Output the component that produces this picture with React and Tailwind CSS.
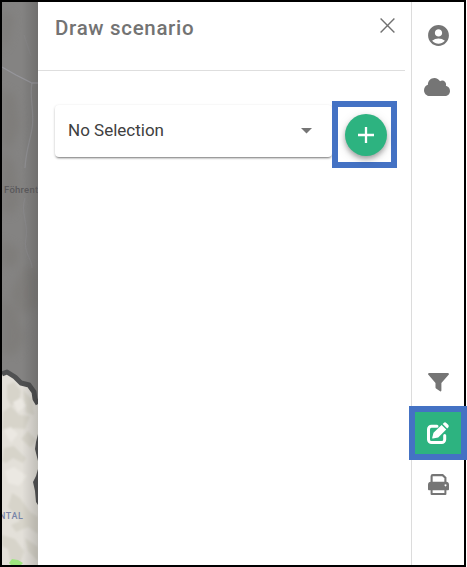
import { FaCloud } from "react-icons/fa";
import { MdAccountCircle } from "react-icons/md";

function MapStrip() {
  return (
    <div className="w-9 shrink-0 overflow-hidden bg-[#848382]">
      <svg width="36" height="563" viewBox="2 2 36 563" className="block">
        <defs>
          <linearGradient id="edge" x1="0" x2="1">
            <stop offset="0.55" stopColor="#000" stopOpacity="0" />
            <stop offset="1" stopColor="#000" stopOpacity="0.15" />
          </linearGradient>
          <filter id="soft"><feGaussianBlur stdDeviation="4" /></filter>
          <filter id="softer"><feGaussianBlur stdDeviation="1.1" /></filter>
        </defs>
        <g fill="#7c7976" opacity=".6" filter="url(#soft)">
          <path d="M2 8l12 10-6 25-6 8zM2 88l13 8 5 30-10 25-8-8zM2 150l12 12 6 40-10 14-8-6zM24 265l14 8v32l-16 10-12-20zM2 240l18 10-4 18-14-3zM2 300l12 6 12 32-12 18-12-4z" />
        </g>
        <g fill="none" stroke="#96969b" strokeWidth="1.3">
          <path d="M2 67l14 8 16 8 6 0" />
          <path d="M32 83c-3 14 3 30 0 46s-6 22-7 39" opacity=".65" />
          <path d="M25 198c-5 16 4 25 1 40s6 20 6 30" opacity=".3" />
          <path d="M24 35l7 21" opacity=".2" />
        </g>
        <path d="M2 373l6-1 7 6 5 5 9 3 6 7 3 12v160H2z" fill="#e3e0d9" />
        <g fill="#d7d4ca" filter="url(#softer)">
          <path d="M7 385l7-3 7 9-2 10-8 5-4-8zM23 390l9 9 2 16-8-2zM3 412l8-6 8 9 11 1-5 13-11-1-5 8-7-7zM4 448l10-2 12 12-3 5-10-5-7 5-4-2zM21 439l7-8 8 9-5 8zM12 493l8 5 10 14 8 5v17l-10-7-12 5-5-7 9-4-12-14zM2 535l13 4 9 12-4 14h-9l-3-16-6-3zM25 538l13 9v14l-10-10z" />
        </g>
        <path d="M3 430l8-3 7 7-7 9zM5 471l9-4 13 9-8 10-11-3zM13 402l8-4 5 8-8 6z" fill="#ebe8e2" filter="url(#softer)" />
        <path d="M2 374l5-2 8 5 6 6 8 2 5 7 1 7 3 5" fill="none" stroke="#505152" strokeWidth="5" strokeLinejoin="round" />
        <path d="M38 434l-2 8-1 7 3 12zM38 469l-2 7-3 6 2 9 1 11 2 3z" fill="#555657" />
        <path d="M9 563l3-4 6 1 5 3-2 2H11z" fill="#9ee67f" />
        <rect x="2" y="2" width="36" height="563" fill="url(#edge)" />
        <text x="4" y="193" fontSize="9.5" letterSpacing=".25" fontWeight="500" fill="#5a595b" fontFamily="Roboto, sans-serif">Föhrent</text>
        <text x="-1" y="519" fontSize="9" letterSpacing=".6" fontWeight="500" fill="#7984a8" fontFamily="Roboto, sans-serif">NTAL</text>
      </svg>
    </div>
  );
}

function ScenarioPanel() {
  return (
    <section className="flex w-[373px] shrink-0 flex-col bg-white">
      <header className="mr-[6px] flex h-[69px] shrink-0 items-start justify-between border-b border-[#dedede] pl-[17px] pr-[10px]">
        <h1 className="mt-[11px] text-[20.5px] leading-[30px] font-medium tracking-[0.68px] text-[#737373]">Draw scenario</h1>
        <button aria-label="Close" className="mt-4">
          <svg width="15" height="15" viewBox="0 0 15 15" fill="none" stroke="#717171" strokeWidth="1.4">
            <path d="M.6.6l13.8 13.8M14.4.6L.6 14.4" />
          </svg>
        </button>
      </header>
      <div className="mt-[30px] flex items-start pl-[17px]">
        <button className="mt-[4px] flex h-[52px] w-[277px] items-center justify-between rounded bg-white pl-[13px] pr-[20px] text-[17px] leading-6 text-[#404040] shadow-[0_2px_2px_-1px_rgba(0,0,0,0.4),0_1px_3px_rgba(0,0,0,0.2)]">
          <span className="pb-[2px]">No Selection</span>
          <svg width="11" height="6" viewBox="0 0 11 6" fill="#757575"><path d="M0 0h11L5.5 5.5z" /></svg>
        </button>
        <div className="flex h-[67px] w-[65px] items-center justify-center border-[6px] border-[#4472c4] bg-white">
          <button aria-label="Add scenario" className="mt-[1px] ml-[3px] flex size-[42px] shrink-0 items-center justify-center rounded-full bg-[#2db380] shadow-[0_3px_5px_rgba(0,0,0,0.3),0_3px_12px_rgba(0,0,0,0.12)]">
            <svg width="16" height="16" viewBox="0 0 16 16" fill="none" stroke="#fff" strokeWidth="2.3"><path d="M0 8h16M8 0v16" /></svg>
          </button>
        </div>
      </div>
    </section>
  );
}

function FilterIcon() {
  return (
    <svg width="21" height="19" viewBox="0 0 21 19" fill="currentColor">
      <path d="M1 0h19q1.6.5.6 1.8L13.4 10v7.6q-.2 1.2-1.3.6L8 15.4q-.5-.4-.5-1V10L.4 1.8Q-.6.5 1 0z" />
    </svg>
  );
}

function EditIcon() {
  return (
    <svg width="22" height="22" viewBox="0 0 22 22" fill="none">
      <path d="M10 4.3H4.5A3 3 0 0 0 1.5 7.3v10.2a3 3 0 0 0 3 3h10.2a3 3 0 0 0 3-3V13.5" stroke="currentColor" strokeWidth="3" strokeLinecap="round" />
      <path d="M14.6 2.9l4.6 4.6-8 7.9-5.3 1.2q-.8 0-.7-.8l1.3-5zM15.7 1.9l1-1q1.3-1.1 2.6 0l1.9 1.9q1.1 1.3 0 2.6l-1 1z" fill="currentColor" />
    </svg>
  );
}

function PrintIcon() {
  return (
    <svg width="21" height="21" viewBox="0 0 21 21" fill="none">
      <path d="M3.6 8V2.3q0-1.2 1.2-1.2h9.8l2.8 2.5V8" stroke="currentColor" strokeWidth="2.1" />
      <path fillRule="evenodd" d="M3 7.8h15a3 3 0 0 1 3 3v4.5q0 .9-.9.9H.9q-.9 0-.9-.9v-4.5a3 3 0 0 1 3-3zm14.5 2.5a1 1 0 1 0 .01 0z" fill="currentColor" />
      <path d="M3.6 15.2h13.8v4.7H3.6z" fill="#fff" stroke="currentColor" strokeWidth="2" strokeLinejoin="round" />
    </svg>
  );
}

function ToolRail() {
  return (
    <nav className="relative flex grow flex-col items-center border-l border-[#dcdcdc] bg-white text-[#757575]">
      <MdAccountCircle size={25} className="mt-[21px]" />
      <FaCloud className="mt-[25px] mr-[2px] h-[28px] w-[26px]" />
      <div className="h-[272px] shrink-0" />
      <FilterIcon />
      <div className="h-[82px] shrink-0" />
      <PrintIcon />
      <div className="absolute top-[404px] left-[-3px] flex h-[54px] w-[58px] items-center justify-center border-[6px] border-[#4472c4] bg-[#2db380] text-white">
        <EditIcon />
      </div>
    </nav>
  );
}

export default function App() {
  return (
    <main className="h-[567px] w-[467px] bg-white font-['Roboto',sans-serif]">
      <div className="flex h-full w-[466px] border-2 border-black">
        <MapStrip />
        <ScenarioPanel />
        <ToolRail />
      </div>
    </main>
  );
}
